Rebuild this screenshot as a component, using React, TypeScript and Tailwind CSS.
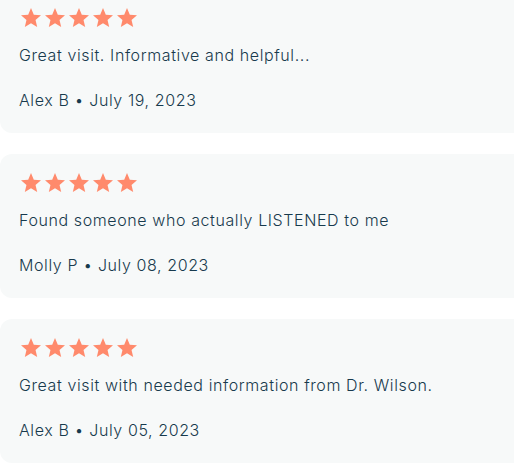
import React from "react";

const reviews = [
  { text: "Great visit. Informative and helpful...", author: "Alex B", date: "July 19, 2023" },
  { text: "Found someone who actually LISTENED to me", author: "Molly P", date: "July 08, 2023" },
  { text: "Great visit with needed information from Dr. Wilson.", author: "Alex B", date: "July 05, 2023" },
];

function Star() {
  return (
    <svg width="24" height="24" viewBox="0 0 24 24" className="fill-[#ff8a6c]">
      <path d="M12 17.27L18.18 21l-1.64-7.03L22 9.24l-7.19-.61L12 2 9.19 8.63 2 9.24l5.46 4.73L5.82 21z" />
    </svg>
  );
}

export default function App() {
  return (
    <div className="w-[514px] h-[464px] overflow-hidden bg-white font-['Inter',sans-serif] font-light text-[#173a4d]">
      <div className="flex flex-col gap-[21px] -mt-[11px] w-[540px]">
        {reviews.map((r, i) => (
          <div key={i} className="bg-[#f7f9f9] rounded-[12px] pt-[17px] pb-[21px] pl-[19px]">
            <div className="flex">
              {[0, 1, 2, 3, 4].map((s) => (
                <Star key={s} />
              ))}
            </div>
            <p className="mt-[13px] text-[16px] leading-[24px] tracking-[0.6px]">{r.text}</p>
            <p className="mt-[21px] text-[16px] leading-[24px] tracking-[0.6px]">
              {r.author} • {r.date}
            </p>
          </div>
        ))}
      </div>
    </div>
  );
}
